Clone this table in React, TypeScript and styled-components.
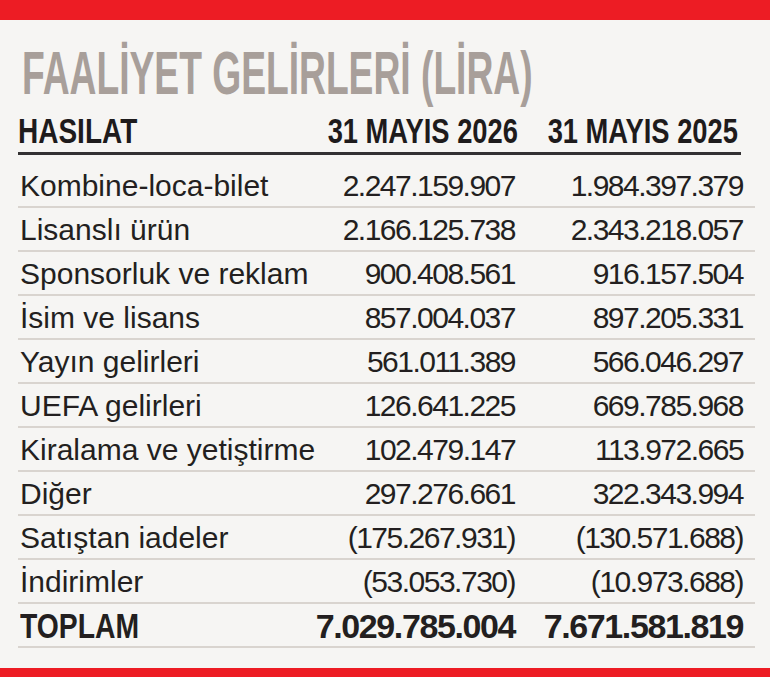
import React from "react";
import styled, { createGlobalStyle } from "styled-components";

const Global = createGlobalStyle`
  html, body { margin: 0; padding: 0; background: #f6f5f3; }
  body { font-family: "Liberation Sans", Arial, sans-serif; color: #231f20; }
`;

const Page = styled.div`
  width: 770px;
  height: 677px;
  background: #f6f5f3;
  display: flex;
  flex-direction: column;
  overflow: hidden;
`;

const RedBar = styled.div<{ $h: number }>`
  height: ${(p) => p.$h}px;
  background: #ed1c24;
  flex-shrink: 0;
`;

const Panel = styled.div`
  flex: 1;
  padding: 0 15px 0 18px;
  display: flex;
  flex-direction: column;
`;

const Title = styled.h1`
  margin: 23px 0 0 4px;
  font-family: "Liberation Sans", sans-serif;
  font-weight: 700;
  font-size: 61px;
  line-height: 60px;
  color: #a89f9a;
  white-space: nowrap;
  transform: scaleX(0.61);
  transform-origin: left center;
`;

const HeaderRow = styled.div`
  margin-top: 10px;
  width: 720px;
  padding: 0 3px 4px 0;
  border-bottom: 3px solid #333132;
  display: grid;
  grid-template-columns: 1fr 200px 220px;
  font-family: "Liberation Sans", sans-serif;
  font-weight: 700;
  font-size: 35px;
  line-height: 35px;
  color: #1e1b1c;
  white-space: nowrap;
`;

const HeadCell = styled.div<{ $right?: boolean }>`
  display: flex;
  justify-content: ${(p) => (p.$right ? "flex-end" : "flex-start")};
  min-width: 0;
`;

const Narrow = styled.span<{ $right?: boolean; $k?: number }>`
  display: inline-block;
  flex-shrink: 0;
  transform: scaleX(${(p) => p.$k ?? 0.79});
  transform-origin: ${(p) => (p.$right ? "right" : "left")} center;
`;

const Rows = styled.div`
  padding-top: 9px;
  display: flex;
  flex-direction: column;
`;

const Row = styled.div`
  display: grid;
  grid-template-columns: 1fr 200px 228px;
  padding: 2px 12px 0 0;
  height: 40px;
  line-height: 40px;
  border-bottom: 2px solid #d9d4cf;
  white-space: nowrap;
  font-size: 30px;
  color: #231f20;
`;

const Label = styled.div<{ $total?: boolean }>`
  padding-left: 2px;
  font-weight: ${(p) => (p.$total ? 700 : 400)};
  font-size: ${(p) => (p.$total ? "35px" : "30px")};
`;

const Num = styled.div<{ $total?: boolean }>`
  text-align: right;
  font-weight: ${(p) => (p.$total ? 700 : 400)};
  font-size: ${(p) => (p.$total ? "34px" : "30px")};
  letter-spacing: ${(p) => (p.$total ? "-1.4px" : "-1.5px")};
`;

const Spacer = styled.div`
  flex: 1;
`;

const data: [string, string, string][] = [
  ["Kombine-loca-bilet", "2.247.159.907", "1.984.397.379"],
  ["Lisanslı ürün", "2.166.125.738", "2.343.218.057"],
  ["Sponsorluk ve reklam", "900.408.561", "916.157.504"],
  ["İsim ve lisans", "857.004.037", "897.205.331"],
  ["Yayın gelirleri", "561.011.389", "566.046.297"],
  ["UEFA gelirleri", "126.641.225", "669.785.968"],
  ["Kiralama ve yetiştirme", "102.479.147", "113.972.665"],
  ["Diğer", "297.276.661", "322.343.994"],
  ["Satıştan iadeler", "(175.267.931)", "(130.571.688)"],
  ["İndirimler", "(53.053.730)", "(10.973.688)"],
];

export default function App() {
  return (
    <Page>
      <Global />
      <RedBar $h={20} />
      <Panel>
        <Title>FAALİYET GELİRLERİ (LİRA)</Title>
        <HeaderRow>
          <HeadCell>
            <Narrow $k={0.8}>HASILAT</Narrow>
          </HeadCell>
          <HeadCell $right>
            <Narrow $right $k={0.78}>31 MAYIS 2026</Narrow>
          </HeadCell>
          <HeadCell $right>
            <Narrow $right $k={0.78}>31 MAYIS 2025</Narrow>
          </HeadCell>
        </HeaderRow>
        <Rows>
          {data.map(([l, a, b]) => (
            <Row key={l}>
              <Label>{l}</Label>
              <Num>{a}</Num>
              <Num>{b}</Num>
            </Row>
          ))}
          <Row>
            <Label $total>
              <Narrow $k={0.81}>TOPLAM</Narrow>
            </Label>
            <Num $total>7.029.785.004</Num>
            <Num $total>7.671.581.819</Num>
          </Row>
        </Rows>
        <Spacer />
      </Panel>
      <RedBar $h={9} />
    </Page>
  );
}
